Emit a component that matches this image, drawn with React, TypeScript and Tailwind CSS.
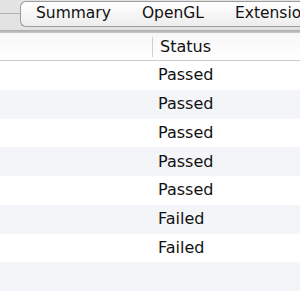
const rows = ["Passed", "Passed", "Passed", "Passed", "Passed", "Failed", "Failed", "", ""];

export default function App() {
  return (
    <div
      className="h-[300px] w-[300px] overflow-hidden bg-white text-[#111]"
      style={{ fontFamily: '"DejaVu Sans", "Lucida Grande", sans-serif' }}
    >
      {/* tab strip */}
      <div className="flex h-[30px] items-start bg-[#e3e3e3]">
        <div className="mt-[13px] h-px w-[20px] bg-[#b4b4b4]" />
        <div className="mt-px flex h-[26px] flex-1 items-center overflow-hidden whitespace-nowrap rounded-l-[6px] border border-r-0 border-[#9c9c9c] bg-gradient-to-b from-[#ffffff] to-[#ededed] text-[15.5px] leading-none">
          <div className="pl-[15px] pr-[16px]">Summary</div>
          <div className="h-[19px] w-px bg-[#c4c4c4]" />
          <div className="pl-[15px] pr-[16px]">OpenGL</div>
          <div className="h-[19px] w-px bg-[#c4c4c4]" />
          <div className="pl-[15px]">Extensions</div>
        </div>
      </div>
      <div className="h-[3px] bg-gradient-to-b from-[#a9a9a9] to-[#c9c9c9]" />

      {/* header */}
      <div className="flex h-[28px] items-center border-b border-[#cbcbcb] bg-gradient-to-b from-[#f7f7f7] to-[#ffffff] text-[16px]">
        <div className="w-[152px]" />
        <div className="h-[20px] w-px bg-[#cfcfcf]" />
        <div className="pl-[7px]">Status</div>
      </div>

      {/* rows */}
      <div className="flex flex-col">
        {rows.map((r, i) => (
          <div
            key={i}
            className={`flex h-[28.75px] shrink-0 items-center text-[16px] ${i % 2 === 1 ? "bg-[#f3f5f8]" : "bg-white"}`}
          >
            <div className="w-[158px]" />
            <div>{r}</div>
          </div>
        ))}
      </div>
    </div>
  );
}
